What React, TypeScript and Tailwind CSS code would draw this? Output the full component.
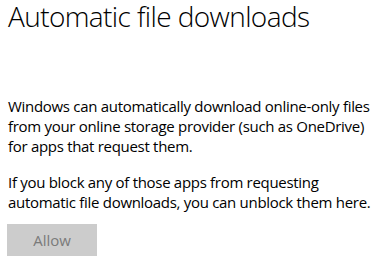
export default function App() {
  return (
    <div className="w-[373px] h-[263px] bg-white text-black overflow-hidden pl-[8px]" style={{ fontFamily: '"Open Sans", "Noto Sans", sans-serif' }}>
      <h1 className="text-[28px] leading-[32px] font-light tracking-[-0.6px]">Automatic file downloads</h1>
      <p className="text-[15px] leading-[20px] mt-[64px] tracking-[-0.3px]">
        Windows can automatically download online-only files from your online storage provider (such as OneDrive) for apps that request them.
      </p>
      <p className="text-[15px] leading-[20px] mt-[16px] tracking-[-0.3px]">
        If you block any of those apps from requesting automatic file downloads, you can unblock them here.
      </p>
      <button className="mt-[12px] ml-[-1px] w-[90px] h-[32px] bg-[#cccccc] text-[#7a7a7a] text-[15px] flex items-center justify-center">
        Allow
      </button>
    </div>
  );
}
